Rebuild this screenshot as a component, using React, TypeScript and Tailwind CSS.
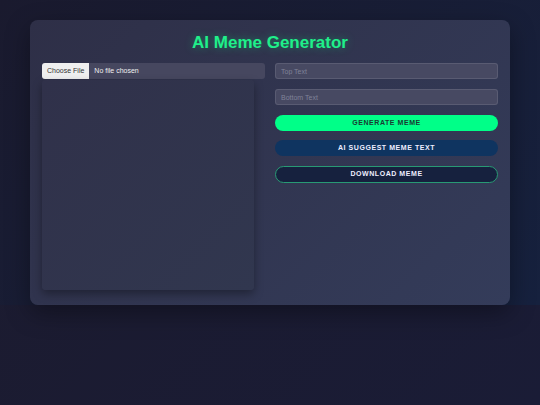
export default function App() {
  return (
    <div className="h-[405px] w-full bg-[linear-gradient(135deg,#1c1b2e,#1a1c36)] font-['Liberation_Sans',Arial,sans-serif]">
      <div className="bg-[linear-gradient(135deg,#1a1a2e,#16213e)] px-[30px] pt-[20px]">
        {/* Card */}
        <div className="rounded-[8px] bg-[linear-gradient(135deg,#2e2f47,#343c5a)] px-[12px] pt-[13px] pb-[15px] shadow-[0_8px_24px_rgba(0,0,0,0.35)]">
          <h1 className="text-center text-[17px] font-bold leading-[20px] text-[#1ff08a] [text-shadow:0_0_8px_rgba(0,255,136,0.35)]">
            AI Meme Generator
          </h1>

          <div className="mt-[10px] grid grid-cols-2 gap-[10px]">
            {/* Left column */}
            <div className="flex flex-col">
              <div className="flex h-[16px] items-center overflow-hidden rounded-[3px] bg-[#46475f] text-[7px]">
                <span className="flex h-full items-center bg-[#efefef] px-[5px] text-[#333]">Choose File</span>
                <span className="pl-[5px] text-[#f0f0f0]">No file chosen</span>
              </div>
              <div className="mt-[1px] h-[210px] w-[212px] rounded-[4px] bg-[linear-gradient(135deg,#30314a,#31374f)] shadow-[0_4px_10px_rgba(0,0,0,0.35)]" />
            </div>

            {/* Right column */}
            <div className="flex flex-col gap-[10px]">
              <input
                placeholder="Top Text"
                className="h-[16px] rounded-[3px] border border-white/10 bg-[#474962] px-[5px] text-[7px] text-white outline-none placeholder:text-[#7f8298]"
              />
              <input
                placeholder="Bottom Text"
                className="h-[16px] rounded-[3px] border border-white/10 bg-[#474962] px-[5px] text-[7px] text-white outline-none placeholder:text-[#7f8298]"
              />
              <button className="h-[16px] rounded-full bg-[#00ff88] text-[7px] font-bold tracking-[0.08em] text-[#1a3a33]">
                GENERATE MEME
              </button>
              <button className="-mt-[1px] h-[16px] rounded-full bg-[#0f3460] text-[7px] font-bold tracking-[0.08em] text-[#eef]">
                AI SUGGEST MEME TEXT
              </button>
              <button className="h-[17px] rounded-full border border-[#289a74] bg-[#16213e] text-[7px] font-bold tracking-[0.08em] text-[#eef]">
                DOWNLOAD MEME
              </button>
            </div>
          </div>
        </div>
      </div>
    </div>
  );
}
